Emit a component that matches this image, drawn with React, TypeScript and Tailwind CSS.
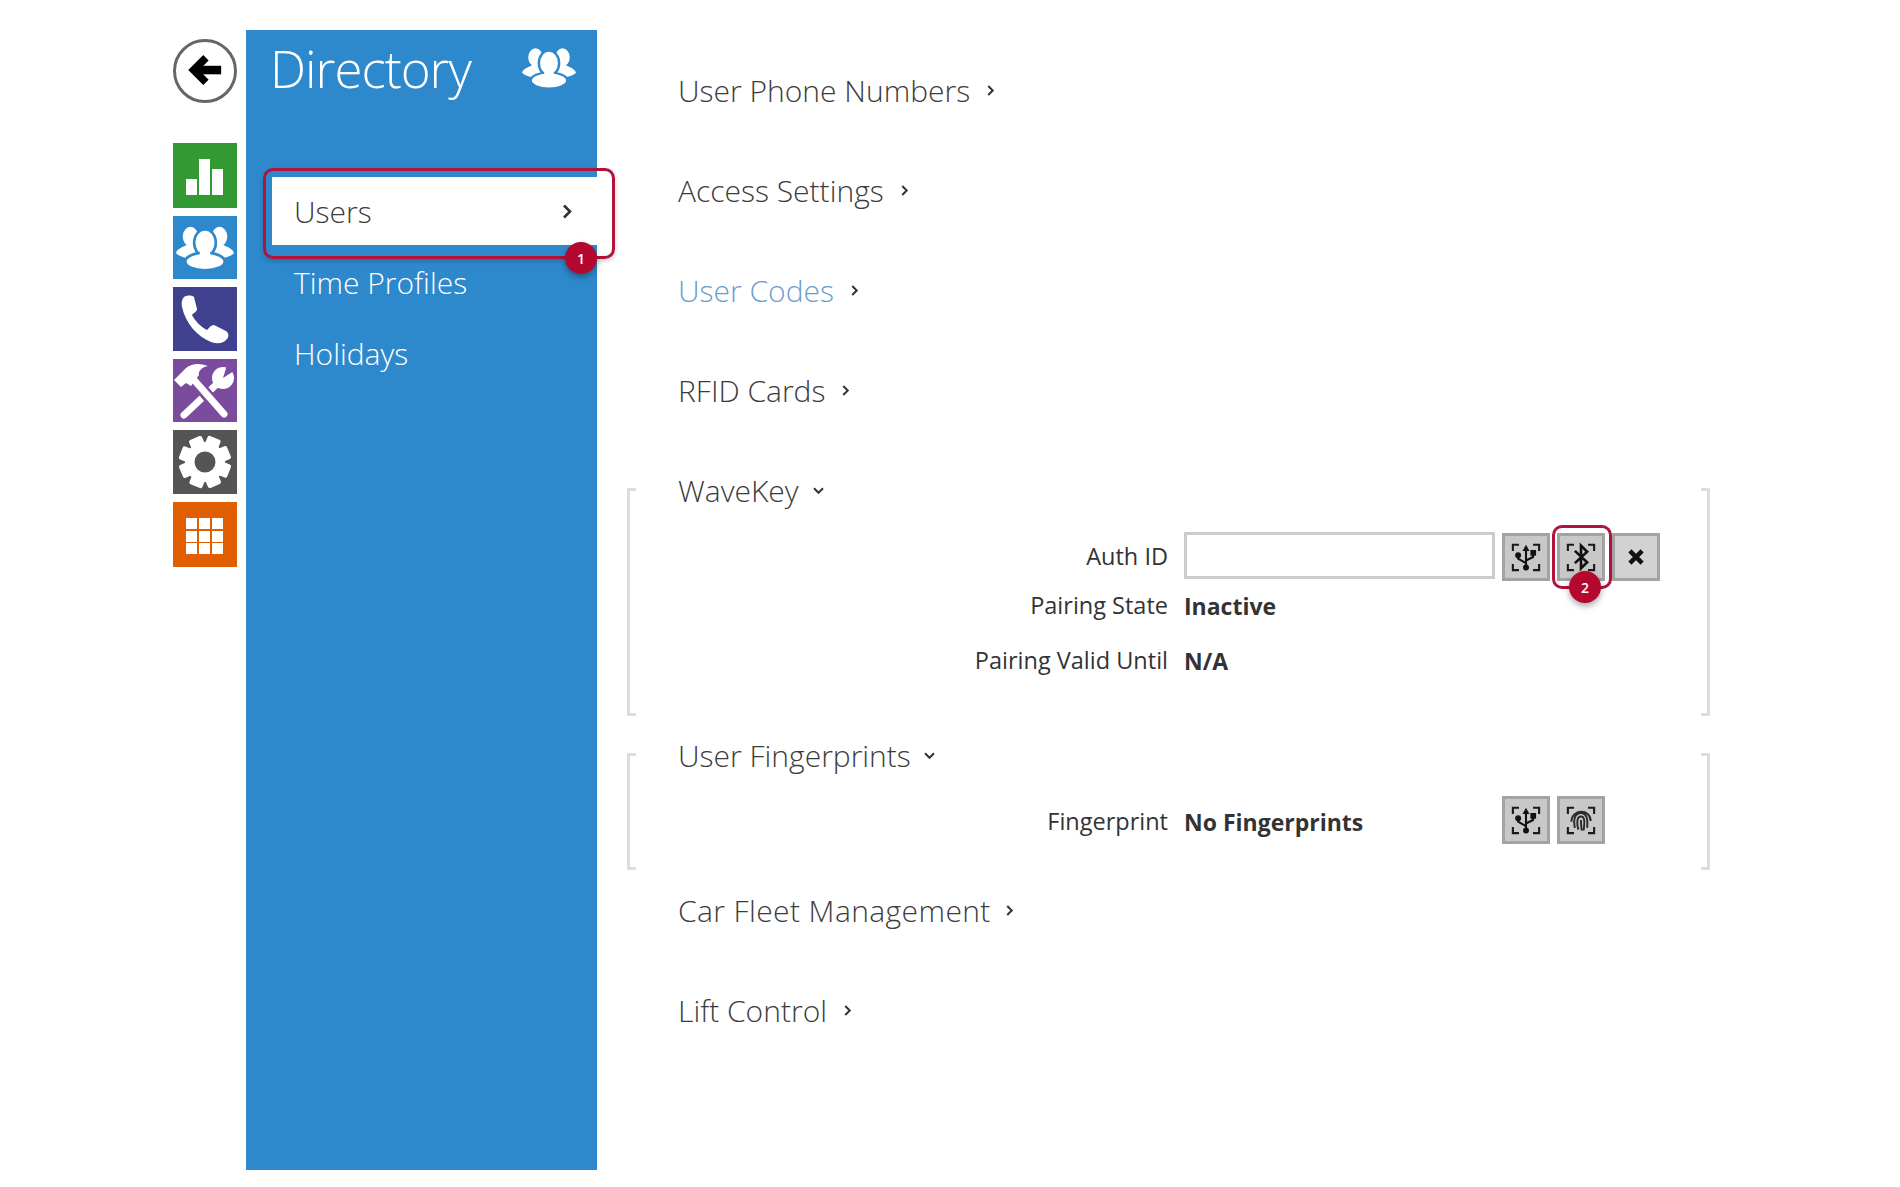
import React from "react";

function People({ bg, className }: { bg: string; className?: string }) {
  return (
    <svg viewBox="0 0 56 42" className={className}>
      <ellipse cx="14" cy="10" rx="7.5" ry="9.5" fill="white" />
      <ellipse cx="42" cy="10" rx="7.5" ry="9.5" fill="white" />
      <path d="M14 16C8 20 1 21 0 26c3 3 9 5 16 5h24c7 0 13-2 16-5-1-5-8-6-14-10z" fill="white" />
      <ellipse cx="28" cy="16" rx="10.5" ry="13" fill="white" stroke={bg} strokeWidth="2.5" />
      <ellipse cx="28" cy="34" rx="19" ry="8.5" fill="white" stroke={bg} strokeWidth="2.5" />
      <rect x="23" y="23" width="10" height="8" fill="white" />
    </svg>
  );
}

function Gear() {
  return (
    <svg viewBox="0 0 64 64" className="w-16 h-16">
      {[0, 45, 90, 135, 180, 225, 270, 315].map((a) => (
        <rect key={a} x="25" y="6" width="14" height="12" rx="2" fill="white" transform={`rotate(${a + 22} 32 32)`} />
      ))}
      <circle cx="32" cy="32" r="20" fill="white" />
      <circle cx="32" cy="32" r="10.5" fill="#555555" />
    </svg>
  );
}

function Tools() {
  return (
    <svg viewBox="0 0 64 64" className="w-16 h-16">
      {/* wrench */}
      <path d="M11 56 45 24" stroke="white" strokeWidth="7" strokeLinecap="round" />
      <circle cx="50" cy="19" r="11" fill="white" />
      <path d="M50 19 64 10 56 0z" fill="#7b4b9e" />
      {/* hammer */}
      <path d="M22 22 52 57" stroke="#7b4b9e" strokeWidth="12" />
      <path d="M22 22 51 55" stroke="white" strokeWidth="7" strokeLinecap="round" />
      <path d="M1 21 13 9C19 4 27 4 35 7c-6 1-10 5-9 9L18 27l-5-3-5 4z" fill="white" />
    </svg>
  );
}

function Corners() {
  return (
    <path
      d="M9 17v-7h7M32 10h7v7M9 32v7h7M32 39h7v-7"
      fill="none"
      stroke="#1a1a1a"
      strokeWidth="2.4"
    />
  );
}

function UsbIcon() {
  return (
    <svg viewBox="0 0 48 48" className="w-full h-full">
      <Corners />
      <path d="M24 17v18M15 23v3l9 5M32 20v4l-8 4" fill="none" stroke="#111" strokeWidth="2.4" />
      <path d="M24 10l4 7h-8z" fill="#111" />
      <circle cx="15" cy="22" r="3.4" fill="#111" />
      <rect x="29" y="16" width="6.5" height="6.5" fill="#111" />
      <circle cx="24" cy="36" r="3.4" fill="#111" />
    </svg>
  );
}

function BluetoothIcon() {
  return (
    <svg viewBox="0 0 48 48" className="w-full h-full">
      <Corners />
      <path d="M17 17 31 30 24 37V11L31 18 17 31" fill="none" stroke="#111" strokeWidth="3" />
    </svg>
  );
}

function FingerprintIcon() {
  return (
    <svg viewBox="0 0 48 48" className="w-full h-full">
      <Corners />
      <path
        d="M13 26C13 11 35 11 35 25M17 33C15 23 17 16 24 16C31 16 32 24 31 33M21 35C19 28 19 20 24 20C29 20 28 28 27 36M24 24C24 29 24 32 25 36"
        fill="none"
        stroke="#2a2a2a"
        strokeWidth="2.2"
      />
    </svg>
  );
}

function Chevron({ down, className }: { down?: boolean; className?: string }) {
  return (
    <svg viewBox="0 0 10 14" className={(down ? "rotate-90 " : "") + (className ?? "w-[9px] h-[13px]")}>
      <path d="M2.5 2 7.5 7 2.5 12" fill="none" stroke="#333" strokeWidth="2.2" />
    </svg>
  );
}

function NavTile({ color, children, h }: { color: string; children: React.ReactNode; h: string }) {
  return <div className={`w-16 flex items-center justify-center ${color} ${h}`}>{children}</div>;
}

function Heading({ children, blue, wide }: { children: React.ReactNode; blue?: boolean; wide?: boolean }) {
  return (
    <div
      className={
        "h-[100px] pl-[51px] flex items-center text-[30px] font-light " +
        (blue ? "text-[#6a9ecb] " : "text-[#3c3c3c] ") +
        (wide ? "gap-[14px] tracking-[0.4px]" : "gap-[16px]")
      }
    >
      {children}
      <Chevron />
    </div>
  );
}

function Bracket({ right }: { right?: boolean }) {
  return (
    <div
      className={
        "w-[9px] shrink-0 border-y-[3px] border-[#dddddd] " + (right ? "border-r-[3px]" : "border-l-[3px]")
      }
    />
  );
}

function Label({ children }: { children: React.ReactNode }) {
  return <div className="w-[490px] mr-[16px] text-right text-[23.5px] text-[#333333]">{children}</div>;
}

function IconButton({ children, light }: { children: React.ReactNode; light?: boolean }) {
  return (
    <button className={"block w-[48px] h-[48px] border-[3px] border-[#a3a3a3] " + (light ? "bg-[#d2d2d2]" : "bg-[#c8c8c8]")}>
      {children}
    </button>
  );
}

function Badge({ n, className }: { n: number; className: string }) {
  return (
    <div
      className={
        "absolute w-[32px] h-[32px] rounded-full bg-[#b5082f] text-white text-[14px] font-semibold flex items-center justify-center shadow-[0_3px_6px_rgba(0,0,0,0.35)] " +
        className
      }
    >
      {n}
    </div>
  );
}

export default function App() {
  return (
    <div className="h-[1187px] bg-white flex pl-[173px] pt-[30px] font-['Open_Sans',sans-serif]">
      {/* tile column */}
      <div className="w-16 mr-[9px] shrink-0 pt-[9px]">
        <div className="w-16 h-16 rounded-full border-[3px] border-[#666666] flex items-center justify-center mb-[40px]">
          <svg viewBox="0 0 40 40" className="w-[38px] h-[38px]">
            <path d="M21 6 8 19l13 13" fill="none" stroke="black" strokeWidth="8" />
            <path d="M11 19h26" stroke="black" strokeWidth="9" />
          </svg>
        </div>
        <div className="flex flex-col gap-2">
          <NavTile color="bg-[#339933]" h="h-[65px]">
            <svg viewBox="0 0 64 65" className="w-16 h-[65px]">
              <path d="M13 36h11v16H13zM26 16h11v36H26zM39 26h11v26H39z" fill="white" />
            </svg>
          </NavTile>
          <NavTile color="bg-[#2e89cc]" h="h-[63px]">
            <People bg="#2e89cc" className="w-[58px] h-[44px]" />
          </NavTile>
          <NavTile color="bg-[#3f418e]" h="h-[64px]">
            <svg viewBox="0 0 64 64" className="w-16 h-16">
              <path
                d="M11 10C14 8 19 8 21 10L24 22C24 25 20 26 19 28C22 34 28 40 34 43C36 41 38 38 41 38L53 44C56 46 56 50 54 52C50 57 44 57 38 55C24 49 13 37 9 20C8 16 9 12 11 10Z"
                fill="white"
              />
            </svg>
          </NavTile>
          <NavTile color="bg-[#7b4b9e]" h="h-[63px]">
            <Tools />
          </NavTile>
          <NavTile color="bg-[#555555]" h="h-[64px]">
            <Gear />
          </NavTile>
          <NavTile color="bg-[#e05d00]" h="h-[65px]">
            <svg viewBox="0 0 64 65" className="w-16 h-[65px]">
              <path
                d="M13 16h11v11H13zM26 16h11v11H26zM39 16h11v11H39zM13 29h11v11H13zM26 29h11v11H26zM39 29h11v11H39zM13 41h11v11H13zM26 41h11v11H26zM39 41h11v11H39z"
                fill="white"
              />
            </svg>
          </NavTile>
        </div>
      </div>

      {/* blue panel */}
      <div className="w-[351px] h-[1140px] shrink-0 bg-[#2e89cc] pl-[26px] text-white">
        <div className="h-[147px] flex items-start justify-between pr-[21px]">
          <div className="text-[51px] font-light leading-[64px] mt-[6px] -ml-[2px] tracking-[-1px]">Directory</div>
          <People bg="#2e89cc" className="w-[54px] h-[42px] mt-[17px]" />
        </div>
        <div className="relative h-[68px] bg-white pl-[22px] pr-[24px] flex items-center justify-between text-[30px] font-light text-[#3c3c3c] mb-[2px]">
          Users
          <Chevron className="w-[12px] h-[17px]" />
          <div className="absolute -left-[9px] -right-[18px] -top-[9px] -bottom-[14px] rounded-[10px] border-[3px] border-[#b3123a] shadow-[0_2px_5px_rgba(0,0,0,0.2)]" />
          <Badge n={1} className="right-0 -bottom-[29px]" />
        </div>
        <div className="h-[71px] pl-[22px] flex items-center text-[30px] font-light">Time Profiles</div>
        <div className="h-[71px] pl-[22px] flex items-center text-[30px] font-light">Holidays</div>
      </div>

      {/* form */}
      <div className="w-[1083px] ml-[30px] shrink-0 pt-[10px]">
        <Heading>User Phone Numbers</Heading>
        <Heading>Access Settings</Heading>
        <Heading blue>User Codes</Heading>
        <Heading>RFID Cards</Heading>

        <div className="flex h-[228px] mt-[48px]">
          <Bracket />
          <div className="flex-1 -mt-[18px] pl-[42px]">
            <div className="h-[40px] flex items-center gap-[15px] text-[30px] font-light text-[#3c3c3c]">
              WaveKey
              <Chevron down />
            </div>
            <div className="flex items-center h-[48px] mt-[23px]">
              <Label>Auth ID</Label>
              <div className="w-[311px] h-[47px] self-start -mt-[1px] border-[3px] border-[#cccccc] mr-[7px]" />
              <div className="flex gap-[7px]">
                <IconButton>
                  <UsbIcon />
                </IconButton>
                <div className="relative">
                  <IconButton>
                    <BluetoothIcon />
                  </IconButton>
                  <div className="absolute -left-[5px] -right-[7px] -top-[8px] -bottom-[8px] rounded-[10px] border-[3px] border-[#b3123a]" />
                  <Badge n={2} className="left-[12px] top-[38px]" />
                </div>
                <IconButton light>
                  <svg viewBox="0 0 48 48" className="w-full h-full">
                    <path d="M17 17 31 31M31 17 17 31" stroke="#111" strokeWidth="5" />
                  </svg>
                </IconButton>
              </div>
            </div>
            <div className="flex items-center h-[40px] mt-[5px]">
              <Label>Pairing State</Label>
              <div className="text-[23px] font-bold text-[#333333]">Inactive</div>
            </div>
            <div className="flex items-center h-[40px] mt-[15px]">
              <Label>Pairing Valid Until</Label>
              <div className="text-[23px] font-bold text-[#333333]">N/A</div>
            </div>
          </div>
          <Bracket right />
        </div>

        <div className="flex h-[117px] mt-[37px]">
          <Bracket />
          <div className="flex-1 -mt-[18px] pl-[42px]">
            <div className="h-[40px] flex items-center gap-[14px] text-[30px] font-light text-[#3c3c3c]">
              User Fingerprints
              <Chevron down />
            </div>
            <div className="flex items-center h-[48px] mt-[21px]">
              <div className="flex items-center mt-[4px]">
                <Label>Fingerprint</Label>
                <div className="w-[318px] text-[23px] font-bold text-[#333333]">No Fingerprints</div>
              </div>
              <div className="flex gap-[7px]">
                <IconButton>
                  <UsbIcon />
                </IconButton>
                <IconButton>
                  <FingerprintIcon />
                </IconButton>
              </div>
            </div>
          </div>
          <Bracket right />
        </div>

        <div className="-mt-[10px]">
          <Heading wide>Car Fleet Management</Heading>
          <Heading>Lift Control</Heading>
        </div>
      </div>
    </div>
  );
}
